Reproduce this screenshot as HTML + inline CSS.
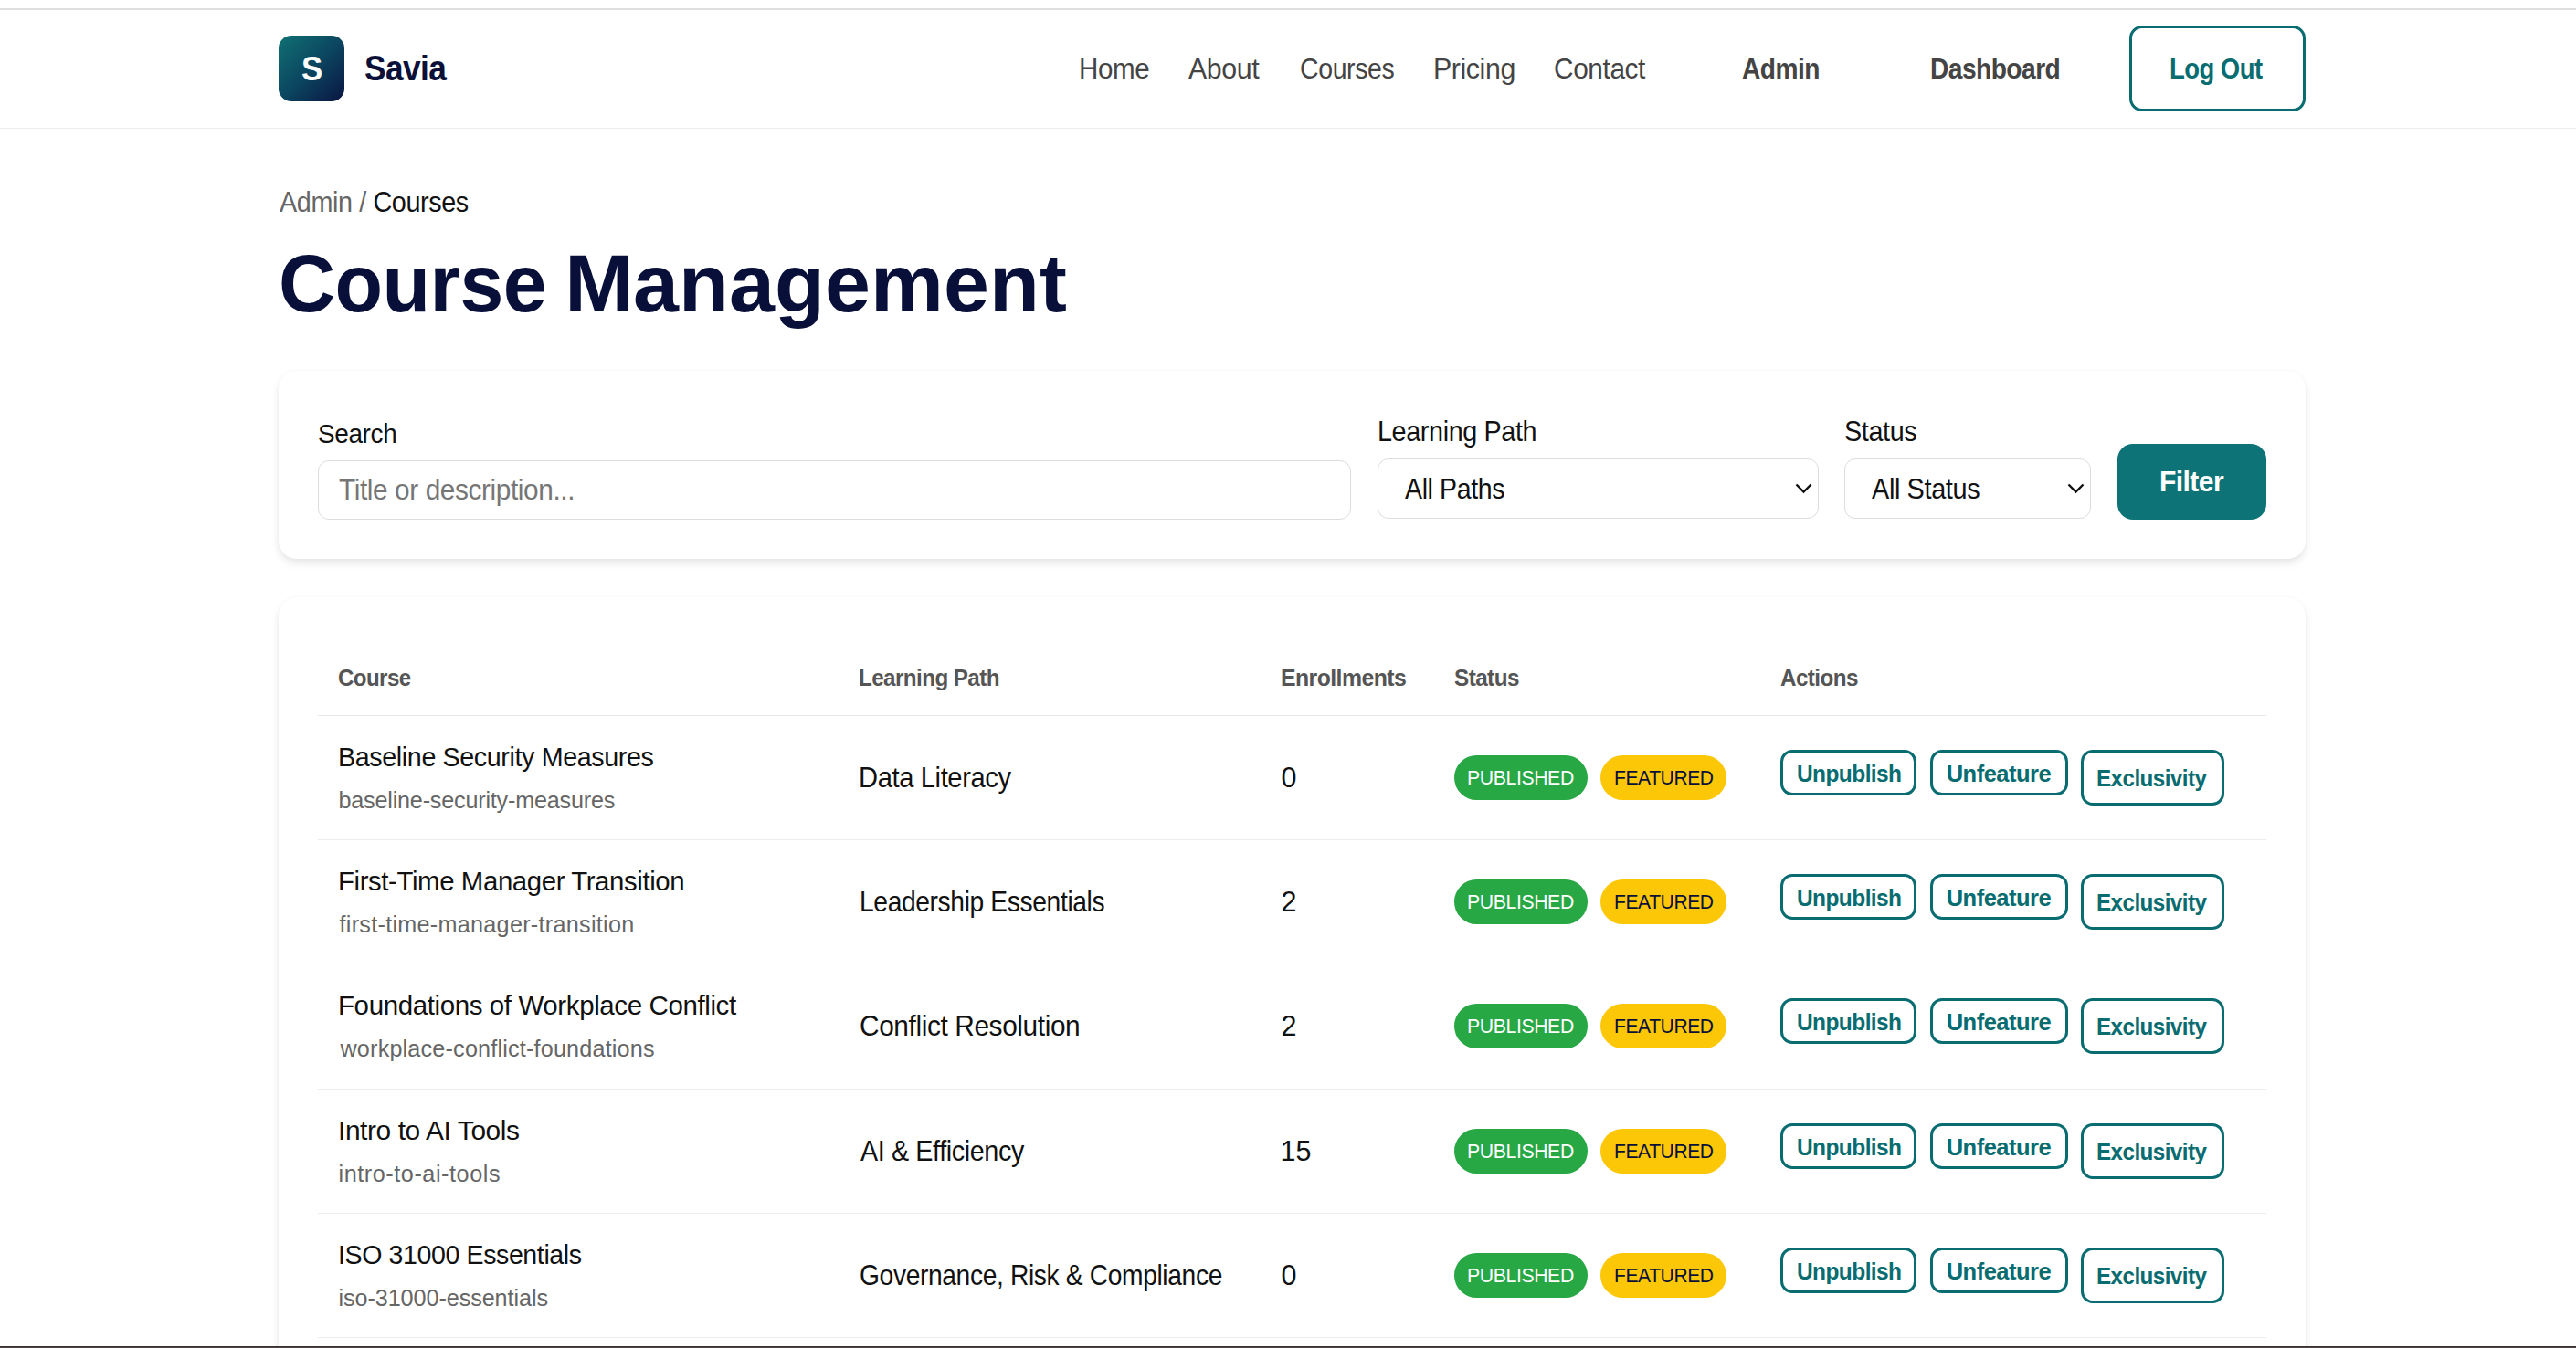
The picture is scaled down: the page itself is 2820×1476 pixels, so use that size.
<!DOCTYPE html>
<html lang="en"><head><meta charset="utf-8"><title>Course Management - Savia Admin</title>
<style>
*{margin:0;padding:0;box-sizing:border-box}
html,body{width:2820px;height:1476px;overflow:hidden;background:#fff;font-family:"Liberation Sans",sans-serif}
header,main,footer,form,section,.page-head{display:block}
.t{position:absolute;white-space:nowrap;transform-origin:0 0}
.b{position:absolute}
</style></head>
<body>
<header>
<div class="b" style="left:0;top:9px;width:2820px;height:2px;background:#dfe0dd"></div>
<div class="b" style="left:0;top:140px;width:2820px;height:1px;background:#ececec"></div>
<div class="b" style="left:305px;top:39px;width:72px;height:72px;border-radius:14px;background:linear-gradient(135deg,#107174 0%,#0b4660 50%,#0a1541 100%)"></div>
<div class="b" style="left:2331px;top:28px;width:193px;height:94px;border:3px solid #086c70;border-radius:14px"></div>
<div class="t" style="left:330.05px;top:58px;font-size:36.5px;line-height:36.5px;font-weight:700;color:#fff;letter-spacing:0.000px;transform:scaleX(0.9545)">S</div>
<div class="t" style="left:399.08px;top:56px;font-size:38.5px;line-height:38.5px;font-weight:700;color:#0a1038;letter-spacing:-0.600px;transform:scaleX(0.9151)">Savia</div>
<div class="t" style="left:1180.60px;top:60px;font-size:31px;line-height:31px;font-weight:400;color:#444444;letter-spacing:-0.400px;transform:scaleX(0.9521)">Home</div>
<div class="t" style="left:1301.00px;top:60px;font-size:31px;line-height:31px;font-weight:400;color:#444444;letter-spacing:-0.400px;transform:scaleX(0.9775)">About</div>
<div class="t" style="left:1423.08px;top:60px;font-size:31px;line-height:31px;font-weight:400;color:#444444;letter-spacing:-0.400px;transform:scaleX(0.9181)">Courses</div>
<div class="t" style="left:1569.25px;top:60px;font-size:31px;line-height:31px;font-weight:400;color:#444444;letter-spacing:-0.400px;transform:scaleX(0.9774)">Pricing</div>
<div class="t" style="left:1701.04px;top:60px;font-size:31px;line-height:31px;font-weight:400;color:#444444;letter-spacing:-0.400px;transform:scaleX(0.9613)">Contact</div>
<div class="t" style="left:1907.00px;top:60px;font-size:31px;line-height:31px;font-weight:700;color:#444444;letter-spacing:-0.600px;transform:scaleX(0.9076)">Admin</div>
<div class="t" style="left:2112.58px;top:60px;font-size:31px;line-height:31px;font-weight:700;color:#444444;letter-spacing:-0.600px;transform:scaleX(0.9087)">Dashboard</div>
<div class="t" style="left:2375.23px;top:60px;font-size:31px;line-height:31px;font-weight:700;color:#086c70;letter-spacing:-0.600px;transform:scaleX(0.8860)">Log Out</div>
</header>
<main>
<div class="page-head">
<div class="t" style="left:305.50px;top:206px;font-size:30.5px;line-height:30.5px;font-weight:400;color:#111111;letter-spacing:-0.400px;transform:scaleX(0.9422)"><span style="color:#666">Admin / </span>Courses</div>
<div class="t" style="left:304.93px;top:266px;font-size:89.8px;line-height:89.8px;font-weight:700;color:#08103a;letter-spacing:-0.600px;transform:scaleX(0.9579)">Course</div>
<div class="t" style="left:618.20px;top:266px;font-size:89.8px;line-height:89.8px;font-weight:700;color:#08103a;letter-spacing:0.082px">Management</div>
</div>
<form class="filters">
<div class="b" style="left:305px;top:406px;width:2219px;height:206px;border-radius:20px;background:#fff;box-shadow:0 5px 10px rgba(0,0,0,0.085), 0 1px 5px rgba(0,0,0,0.03)"></div>
<div class="b" style="left:348px;top:504px;width:1131px;height:65px;border:1px solid #dddddd;border-radius:12px;background:#fff"></div>
<div class="b" style="left:1508px;top:502px;width:483px;height:66px;border:1px solid #dddddd;border-radius:12px;background:#fff"></div>
<div class="b" style="left:2019px;top:502px;width:270px;height:66px;border:1px solid #dddddd;border-radius:12px;background:#fff"></div>
<div class="b" style="left:2318px;top:486px;width:163px;height:83px;border-radius:17px;background:#0e7376"></div>
<svg class="b" style="left:1965px;top:529px" width="19" height="12" viewBox="0 0 19 12"><path d="M1.5 1.5 L9.5 9.5 L17.5 1.5" fill="none" stroke="#111" stroke-width="2.4"/></svg>
<svg class="b" style="left:2263px;top:529px" width="19" height="12" viewBox="0 0 19 12"><path d="M1.5 1.5 L9.5 9.5 L17.5 1.5" fill="none" stroke="#111" stroke-width="2.4"/></svg>
<div class="t" style="left:348.37px;top:460px;font-size:30px;line-height:30px;font-weight:400;color:#111111;letter-spacing:-0.400px;transform:scaleX(0.9317)">Search</div>
<div class="t" style="left:371.00px;top:521px;font-size:30.5px;line-height:30.5px;font-weight:400;color:#767676;letter-spacing:-0.400px;transform:scaleX(0.9764)">Title or description...</div>
<div class="t" style="left:1508.11px;top:457px;font-size:30.5px;line-height:30.5px;font-weight:400;color:#111111;letter-spacing:-0.400px;transform:scaleX(0.9428)">Learning Path</div>
<div class="t" style="left:1538.00px;top:520px;font-size:30.5px;line-height:30.5px;font-weight:400;color:#111111;letter-spacing:-0.400px;transform:scaleX(0.9340)">All Paths</div>
<div class="t" style="left:2019.06px;top:457px;font-size:30.5px;line-height:30.5px;font-weight:400;color:#111111;letter-spacing:-0.400px;transform:scaleX(0.9433)">Status</div>
<div class="t" style="left:2049.30px;top:520px;font-size:30.5px;line-height:30.5px;font-weight:400;color:#111111;letter-spacing:-0.400px;transform:scaleX(0.9473)">All Status</div>
<div class="t" style="left:2363.86px;top:512px;font-size:31px;line-height:31px;font-weight:700;color:#fff;letter-spacing:-0.600px;transform:scaleX(0.9699)">Filter</div>
</form>
<section class="courses">
<div class="b" style="left:305px;top:654px;width:2219px;height:900px;border-radius:21px;background:#fff;box-shadow:0 5px 10px rgba(0,0,0,0.085), 0 1px 5px rgba(0,0,0,0.03)"></div>
<div class="b" style="left:348px;top:783px;width:2133px;height:1px;background:#e9e9e9"></div>
<div class="b" style="left:1592px;top:827.2px;width:146px;height:48.6px;border-radius:25px;background:#28a745"></div>
<div class="b" style="left:1752px;top:827.2px;width:138px;height:48.6px;border-radius:25px;background:#fbc707"></div>
<div class="b" style="left:1949px;top:821px;width:149px;height:50px;border:3px solid #086c70;border-radius:13px"></div>
<div class="b" style="left:2113px;top:821px;width:151px;height:50px;border:3px solid #086c70;border-radius:13px"></div>
<div class="b" style="left:2278px;top:821px;width:157px;height:61px;border:3px solid #086c70;border-radius:13px"></div>
<div class="b" style="left:348px;top:919px;width:2133px;height:1px;background:#ececec"></div>
<div class="b" style="left:1592px;top:963.2px;width:146px;height:48.6px;border-radius:25px;background:#28a745"></div>
<div class="b" style="left:1752px;top:963.2px;width:138px;height:48.6px;border-radius:25px;background:#fbc707"></div>
<div class="b" style="left:1949px;top:957px;width:149px;height:50px;border:3px solid #086c70;border-radius:13px"></div>
<div class="b" style="left:2113px;top:957px;width:151px;height:50px;border:3px solid #086c70;border-radius:13px"></div>
<div class="b" style="left:2278px;top:957px;width:157px;height:61px;border:3px solid #086c70;border-radius:13px"></div>
<div class="b" style="left:348px;top:1055px;width:2133px;height:1px;background:#ececec"></div>
<div class="b" style="left:1592px;top:1099.2px;width:146px;height:48.6px;border-radius:25px;background:#28a745"></div>
<div class="b" style="left:1752px;top:1099.2px;width:138px;height:48.6px;border-radius:25px;background:#fbc707"></div>
<div class="b" style="left:1949px;top:1093px;width:149px;height:50px;border:3px solid #086c70;border-radius:13px"></div>
<div class="b" style="left:2113px;top:1093px;width:151px;height:50px;border:3px solid #086c70;border-radius:13px"></div>
<div class="b" style="left:2278px;top:1093px;width:157px;height:61px;border:3px solid #086c70;border-radius:13px"></div>
<div class="b" style="left:348px;top:1192px;width:2133px;height:1px;background:#ececec"></div>
<div class="b" style="left:1592px;top:1236.2px;width:146px;height:48.6px;border-radius:25px;background:#28a745"></div>
<div class="b" style="left:1752px;top:1236.2px;width:138px;height:48.6px;border-radius:25px;background:#fbc707"></div>
<div class="b" style="left:1949px;top:1230px;width:149px;height:50px;border:3px solid #086c70;border-radius:13px"></div>
<div class="b" style="left:2113px;top:1230px;width:151px;height:50px;border:3px solid #086c70;border-radius:13px"></div>
<div class="b" style="left:2278px;top:1230px;width:157px;height:61px;border:3px solid #086c70;border-radius:13px"></div>
<div class="b" style="left:348px;top:1328px;width:2133px;height:1px;background:#ececec"></div>
<div class="b" style="left:1592px;top:1372.2px;width:146px;height:48.6px;border-radius:25px;background:#28a745"></div>
<div class="b" style="left:1752px;top:1372.2px;width:138px;height:48.6px;border-radius:25px;background:#fbc707"></div>
<div class="b" style="left:1949px;top:1366px;width:149px;height:50px;border:3px solid #086c70;border-radius:13px"></div>
<div class="b" style="left:2113px;top:1366px;width:151px;height:50px;border:3px solid #086c70;border-radius:13px"></div>
<div class="b" style="left:2278px;top:1366px;width:157px;height:61px;border:3px solid #086c70;border-radius:13px"></div>
<div class="b" style="left:348px;top:1464px;width:2133px;height:1px;background:#ececec"></div>
<div class="t" style="left:369.87px;top:729px;font-size:26px;line-height:26px;font-weight:700;color:#555555;letter-spacing:-0.600px;transform:scaleX(0.9258)">Course</div>
<div class="t" style="left:940.27px;top:729px;font-size:26px;line-height:26px;font-weight:700;color:#555555;letter-spacing:-0.600px;transform:scaleX(0.9296)">Learning Path</div>
<div class="t" style="left:1402.24px;top:729px;font-size:26px;line-height:26px;font-weight:700;color:#555555;letter-spacing:-0.600px;transform:scaleX(0.9553)">Enrollments</div>
<div class="t" style="left:1592.20px;top:729px;font-size:26px;line-height:26px;font-weight:700;color:#555555;letter-spacing:-0.600px;transform:scaleX(0.9342)">Status</div>
<div class="t" style="left:1949.10px;top:729px;font-size:26px;line-height:26px;font-weight:700;color:#555555;letter-spacing:-0.600px;transform:scaleX(0.9312)">Actions</div>
<div class="t" style="left:370.09px;top:814px;font-size:30px;line-height:30px;font-weight:400;color:#111111;letter-spacing:-0.400px;transform:scaleX(0.9559)">Baseline Security Measures</div>
<div class="t" style="left:370.50px;top:864px;font-size:25.2px;line-height:25.2px;font-weight:400;color:#666;letter-spacing:-0.207px">baseline-security-measures</div>
<div class="t" style="left:940.49px;top:836px;font-size:30.5px;line-height:30.5px;font-weight:400;color:#111111;letter-spacing:-0.400px;transform:scaleX(0.9554)">Data Literacy</div>
<div class="t" style="left:1402.50px;top:836px;font-size:30.5px;line-height:30.5px;font-weight:400;color:#111111;letter-spacing:0.000px">0</div>
<div class="t" style="left:1606.41px;top:842px;font-size:21.4px;line-height:21.4px;font-weight:400;color:#fff;letter-spacing:-0.400px;transform:scaleX(0.9931)">PUBLISHED</div>
<div class="t" style="left:1766.52px;top:842px;font-size:21.4px;line-height:21.4px;font-weight:400;color:#0a1038;letter-spacing:-0.400px;transform:scaleX(0.9832)">FEATURED</div>
<div class="t" style="left:1966.94px;top:835px;font-size:25.5px;line-height:25.5px;font-weight:700;color:#086c70;letter-spacing:-0.600px;transform:scaleX(0.9602)">Unpublish</div>
<div class="t" style="left:2130.70px;top:835px;font-size:25.5px;line-height:25.5px;font-weight:700;color:#086c70;letter-spacing:-0.505px">Unfeature</div>
<div class="t" style="left:2295.15px;top:840px;font-size:25.5px;line-height:25.5px;font-weight:700;color:#086c70;letter-spacing:-0.600px;transform:scaleX(0.9500)">Exclusivity</div>
<div class="t" style="left:370.04px;top:950px;font-size:30px;line-height:30px;font-weight:400;color:#111111;letter-spacing:-0.400px;transform:scaleX(0.9788)">First-Time Manager Transition</div>
<div class="t" style="left:371.50px;top:1000px;font-size:25.2px;line-height:25.2px;font-weight:400;color:#666;letter-spacing:0.278px">first-time-manager-transition</div>
<div class="t" style="left:940.55px;top:972px;font-size:30.5px;line-height:30.5px;font-weight:400;color:#111111;letter-spacing:-0.400px;transform:scaleX(0.9249)">Leadership Essentials</div>
<div class="t" style="left:1402.50px;top:972px;font-size:30.5px;line-height:30.5px;font-weight:400;color:#111111;letter-spacing:0.000px">2</div>
<div class="t" style="left:1606.41px;top:978px;font-size:21.4px;line-height:21.4px;font-weight:400;color:#fff;letter-spacing:-0.400px;transform:scaleX(0.9931)">PUBLISHED</div>
<div class="t" style="left:1766.52px;top:978px;font-size:21.4px;line-height:21.4px;font-weight:400;color:#0a1038;letter-spacing:-0.400px;transform:scaleX(0.9832)">FEATURED</div>
<div class="t" style="left:1966.94px;top:971px;font-size:25.5px;line-height:25.5px;font-weight:700;color:#086c70;letter-spacing:-0.600px;transform:scaleX(0.9602)">Unpublish</div>
<div class="t" style="left:2130.70px;top:971px;font-size:25.5px;line-height:25.5px;font-weight:700;color:#086c70;letter-spacing:-0.505px">Unfeature</div>
<div class="t" style="left:2295.15px;top:976px;font-size:25.5px;line-height:25.5px;font-weight:700;color:#086c70;letter-spacing:-0.600px;transform:scaleX(0.9500)">Exclusivity</div>
<div class="t" style="left:370.03px;top:1086px;font-size:30px;line-height:30px;font-weight:400;color:#111111;letter-spacing:-0.400px;transform:scaleX(0.9832)">Foundations of Workplace Conflict</div>
<div class="t" style="left:372.50px;top:1136px;font-size:25.2px;line-height:25.2px;font-weight:400;color:#666;letter-spacing:0.182px">workplace-conflict-foundations</div>
<div class="t" style="left:941.42px;top:1108px;font-size:30.5px;line-height:30.5px;font-weight:400;color:#111111;letter-spacing:-0.400px;transform:scaleX(0.9782)">Conflict Resolution</div>
<div class="t" style="left:1402.50px;top:1108px;font-size:30.5px;line-height:30.5px;font-weight:400;color:#111111;letter-spacing:0.000px">2</div>
<div class="t" style="left:1606.41px;top:1114px;font-size:21.4px;line-height:21.4px;font-weight:400;color:#fff;letter-spacing:-0.400px;transform:scaleX(0.9931)">PUBLISHED</div>
<div class="t" style="left:1766.52px;top:1114px;font-size:21.4px;line-height:21.4px;font-weight:400;color:#0a1038;letter-spacing:-0.400px;transform:scaleX(0.9832)">FEATURED</div>
<div class="t" style="left:1966.94px;top:1107px;font-size:25.5px;line-height:25.5px;font-weight:700;color:#086c70;letter-spacing:-0.600px;transform:scaleX(0.9602)">Unpublish</div>
<div class="t" style="left:2130.70px;top:1107px;font-size:25.5px;line-height:25.5px;font-weight:700;color:#086c70;letter-spacing:-0.505px">Unfeature</div>
<div class="t" style="left:2295.15px;top:1112px;font-size:25.5px;line-height:25.5px;font-weight:700;color:#086c70;letter-spacing:-0.600px;transform:scaleX(0.9500)">Exclusivity</div>
<div class="t" style="left:370.01px;top:1223px;font-size:30px;line-height:30px;font-weight:400;color:#111111;letter-spacing:-0.400px;transform:scaleX(0.9958)">Intro to AI Tools</div>
<div class="t" style="left:370.50px;top:1273px;font-size:25.2px;line-height:25.2px;font-weight:400;color:#666;letter-spacing:0.564px">intro-to-ai-tools</div>
<div class="t" style="left:942.40px;top:1245px;font-size:30.5px;line-height:30.5px;font-weight:400;color:#111111;letter-spacing:-0.400px;transform:scaleX(0.9413)">AI &amp; Efficiency</div>
<div class="t" style="left:1401.50px;top:1245px;font-size:30.5px;line-height:30.5px;font-weight:400;color:#111111;letter-spacing:0.000px">15</div>
<div class="t" style="left:1606.41px;top:1251px;font-size:21.4px;line-height:21.4px;font-weight:400;color:#fff;letter-spacing:-0.400px;transform:scaleX(0.9931)">PUBLISHED</div>
<div class="t" style="left:1766.52px;top:1251px;font-size:21.4px;line-height:21.4px;font-weight:400;color:#0a1038;letter-spacing:-0.400px;transform:scaleX(0.9832)">FEATURED</div>
<div class="t" style="left:1966.94px;top:1244px;font-size:25.5px;line-height:25.5px;font-weight:700;color:#086c70;letter-spacing:-0.600px;transform:scaleX(0.9602)">Unpublish</div>
<div class="t" style="left:2130.70px;top:1244px;font-size:25.5px;line-height:25.5px;font-weight:700;color:#086c70;letter-spacing:-0.505px">Unfeature</div>
<div class="t" style="left:2295.15px;top:1249px;font-size:25.5px;line-height:25.5px;font-weight:700;color:#086c70;letter-spacing:-0.600px;transform:scaleX(0.9500)">Exclusivity</div>
<div class="t" style="left:370.10px;top:1359px;font-size:30px;line-height:30px;font-weight:400;color:#111111;letter-spacing:-0.400px;transform:scaleX(0.9507)">ISO 31000 Essentials</div>
<div class="t" style="left:370.50px;top:1409px;font-size:25.2px;line-height:25.2px;font-weight:400;color:#666;letter-spacing:-0.080px">iso-31000-essentials</div>
<div class="t" style="left:941.48px;top:1381px;font-size:30.5px;line-height:30.5px;font-weight:400;color:#111111;letter-spacing:-0.400px;transform:scaleX(0.9250)">Governance, Risk &amp; Compliance</div>
<div class="t" style="left:1402.50px;top:1381px;font-size:30.5px;line-height:30.5px;font-weight:400;color:#111111;letter-spacing:0.000px">0</div>
<div class="t" style="left:1606.41px;top:1387px;font-size:21.4px;line-height:21.4px;font-weight:400;color:#fff;letter-spacing:-0.400px;transform:scaleX(0.9931)">PUBLISHED</div>
<div class="t" style="left:1766.52px;top:1387px;font-size:21.4px;line-height:21.4px;font-weight:400;color:#0a1038;letter-spacing:-0.400px;transform:scaleX(0.9832)">FEATURED</div>
<div class="t" style="left:1966.94px;top:1380px;font-size:25.5px;line-height:25.5px;font-weight:700;color:#086c70;letter-spacing:-0.600px;transform:scaleX(0.9602)">Unpublish</div>
<div class="t" style="left:2130.70px;top:1380px;font-size:25.5px;line-height:25.5px;font-weight:700;color:#086c70;letter-spacing:-0.505px">Unfeature</div>
<div class="t" style="left:2295.15px;top:1385px;font-size:25.5px;line-height:25.5px;font-weight:700;color:#086c70;letter-spacing:-0.600px;transform:scaleX(0.9500)">Exclusivity</div>
</section>
</main>
<footer>
<div class="b" style="left:0;top:1474px;width:2820px;height:1px;background:#3f3232"></div>
<div class="b" style="left:0;top:1475px;width:2820px;height:1px;background:#4b4242"></div>
</footer>
</body></html>
